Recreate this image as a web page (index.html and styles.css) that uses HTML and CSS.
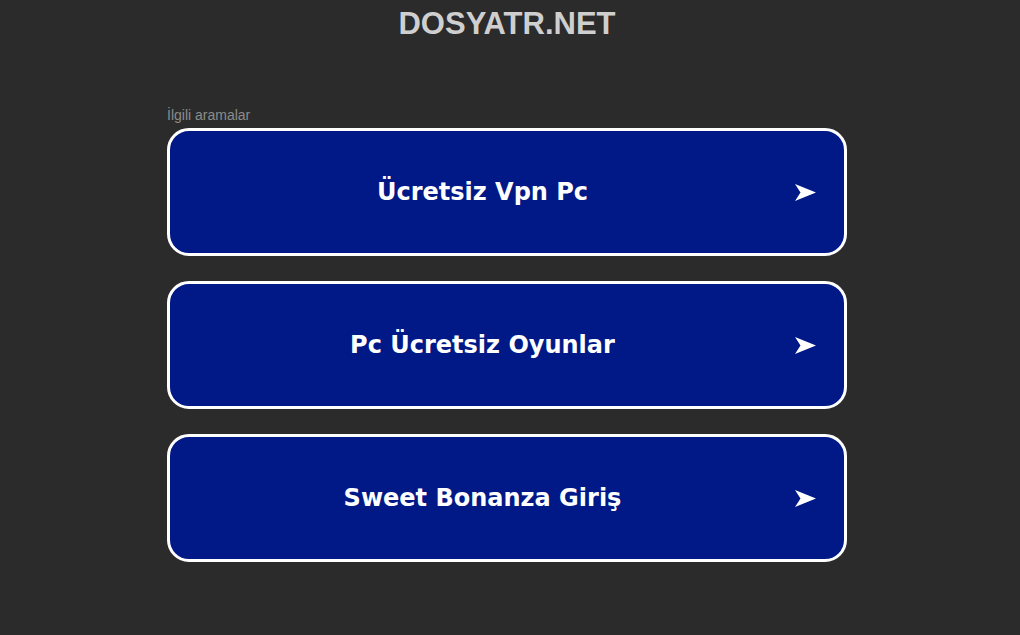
FILE: index.html
```html
<!DOCTYPE html>
<html lang="tr">
<head>
<meta charset="utf-8">
<title>dosyatr.net</title>
<link rel="stylesheet" href="styles.css">
</head>
<body>
<header class="site-header">
  <h1 class="site-title">DOSYATR.NET</h1>
</header>
<main class="results">
  <p class="results-label">İlgili aramalar</p>
  <ul class="result-list">
    <li><a class="result" href="#"><span class="result-text">Ücretsiz Vpn Pc</span><svg class="result-arrow" viewBox="0 0 21 17" width="21" height="17"><path d="M0 0 L21 8.5 L0 17 L5.5 8.5 Z" fill="#fff"/></svg></a></li>
    <li><a class="result" href="#"><span class="result-text">Pc Ücretsiz Oyunlar</span><svg class="result-arrow" viewBox="0 0 21 17" width="21" height="17"><path d="M0 0 L21 8.5 L0 17 L5.5 8.5 Z" fill="#fff"/></svg></a></li>
    <li><a class="result" href="#"><span class="result-text">Sweet Bonanza Giriş</span><svg class="result-arrow" viewBox="0 0 21 17" width="21" height="17"><path d="M0 0 L21 8.5 L0 17 L5.5 8.5 Z" fill="#fff"/></svg></a></li>
  </ul>
</main>
</body>
</html>
```
FILE: styles.css
```css
html, body {
  margin: 0;
  padding: 0;
  background: #2b2b2b;
}
body {
  padding-right: 6px;
  font-family: "Liberation Sans", Arial, sans-serif;
}
.site-header {
  padding-top: 6px;
  text-align: center;
}
.site-title {
  margin: 0;
  font-size: 31px;
  line-height: 35px;
  font-weight: bold;
  color: #cfcfcf;
}
.results {
  width: 680px;
  margin: 66px auto 0;
}
.results-label {
  margin: 0 0 5px;
  font-size: 14px;
  line-height: 16px;
  color: #8c8c8c;
}
.result-list {
  list-style: none;
  margin: 0;
  padding: 0;
  display: flex;
  flex-direction: column;
  gap: 25px;
}
.result {
  display: flex;
  align-items: center;
  height: 122px;
  border: 3px solid #ffffff;
  border-radius: 22px;
  background: #011887;
  text-decoration: none;
  color: #ffffff;
}
.result-text {
  flex: 1;
  text-align: center;
  font-family: "DejaVu Sans", Verdana, sans-serif;
  font-weight: bold;
  font-size: 24px;
  line-height: 28px;
}
.result-arrow {
  display: block;
  margin-right: 28px;
  flex: none;
}
```
